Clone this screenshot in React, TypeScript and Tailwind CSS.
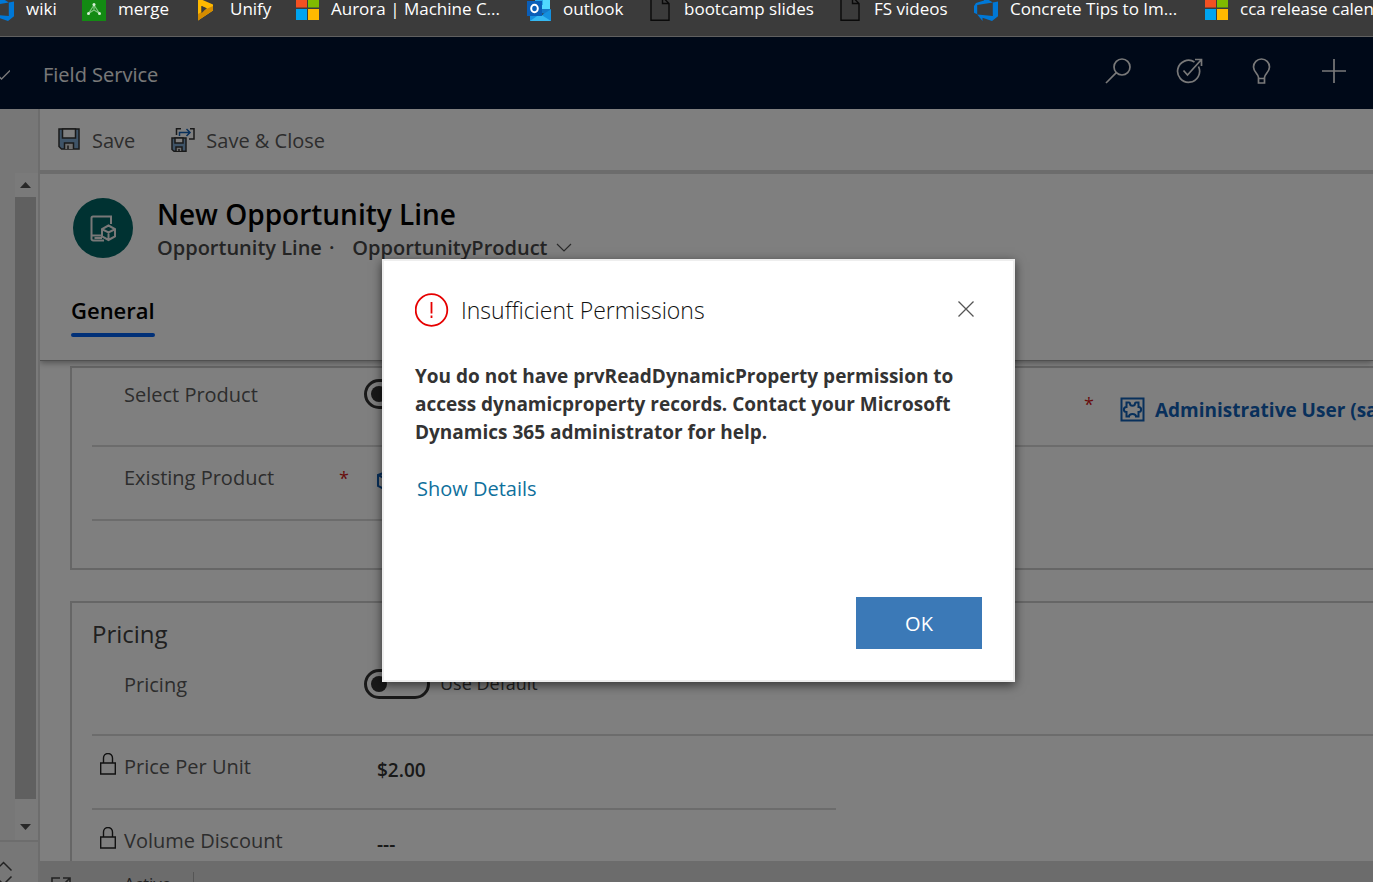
import React from "react";

type IconProps = { className?: string };

function DevOpsIcon({ className = "" }: IconProps) {
  return (
    <svg viewBox="0 0 24 24" className={`size-6 shrink-0 ${className}`} aria-hidden="true">
      <path
        fill="#0078d7"
        d="M24 4.500v14.800L18 24l-9.500-3.300V24L3.200 17.600l15.600 1.300V5.400L24 4.500ZM18.800 5.500 10 0v3.600L2 6 0 9v6.800l3.200 1.500V8.100l15.600-2.600Z"
      />
    </svg>
  );
}

function MergeIcon() {
  return (
    <svg viewBox="0 0 24 24" className="size-6 shrink-0" aria-hidden="true">
      <path fill="#138a13" d="M0 0h24v24H0z" />
      <path d="M12 8 6.500 16.500M12 8l5.500 8.500M6.500 16.500 12 13l5.500 3.500M12 8v5" stroke="#7fc47f" strokeWidth="1.200" fill="none" />
      <circle cx="12" cy="7.500" r="1.500" fill="#d5f0d5" />
      <circle cx="6.500" cy="16.500" r="1.500" fill="#d5f0d5" />
      <circle cx="17.500" cy="16.500" r="1.500" fill="#d5f0d5" />
    </svg>
  );
}

function UnifyIcon() {
  return (
    <svg viewBox="0 0 24 24" className="size-6 shrink-0" aria-hidden="true">
      <path fill="#ffb900" d="M4 1 19 7.500v6L4 23.500V17l9-5.500L7.500 9v6L4 17V1Z" />
      <path fill="#d48c00" d="m4 17 9.500-5.500L19 9v4.500l-15 10V17Z" />
      <path fill="#3b3b3b" d="m7.500 9 5 2.300-5 5V9Z" />
    </svg>
  );
}

function MicrosoftIcon() {
  return (
    <svg viewBox="0 0 24 24" className="size-6 shrink-0" aria-hidden="true">
      <path fill="#f25022" d="M1 0h11v10.500H1z" />
      <path fill="#7fba00" d="M13 0h11v10.500H13z" />
      <path fill="#00a4ef" d="M1 12h11v11H1z" />
      <path fill="#ffb900" d="M13 12h11v11H13z" />
    </svg>
  );
}

function OutlookIcon() {
  return (
    <svg viewBox="0 0 24 24" className="size-6 shrink-0" aria-hidden="true">
      <path fill="#50d9ff" d="M8 0h15v13H8z" />
      <path fill="#28a8ea" d="M8 0h8v8H8z" />
      <path fill="#1478c8" d="M14 12h10l-6 5-4-1z" />
      <path fill="#1490df" d="M3 14v10h21V12l-9 6-12-4Z" />
      <path fill="#35b8f1" d="M3 24h21L13 17l-10 7Z" />
      <path fill="#0a5eb8" d="M0 4h15v15H0z" />
      <ellipse cx="7.500" cy="11.500" rx="3.300" ry="3.700" fill="none" stroke="#fff" strokeWidth="2" />
    </svg>
  );
}

function FileIcon() {
  return (
    <svg viewBox="0 0 24 24" className="size-6 shrink-0" aria-hidden="true">
      <path d="M3 0v23.300h18V6.500L14.500 0H3ZM14.500 0v6.500H21" fill="none" stroke="#0a0a0a" strokeWidth="1.400" />
    </svg>
  );
}

const bookmarks = [
  { label: "wiki", icon: <DevOpsIcon />, width: "w-[92px]" },
  { label: "merge", icon: <MergeIcon />, width: "w-[112px]" },
  { label: "Unify", icon: <UnifyIcon />, width: "w-[101px]" },
  { label: "Aurora | Machine C...", icon: <MicrosoftIcon />, width: "w-[232px]" },
  { label: "outlook", icon: <OutlookIcon />, width: "w-[121px]" },
  { label: "bootcamp slides", icon: <FileIcon />, width: "w-[190px]" },
  { label: "FS videos", icon: <FileIcon />, width: "w-[136px]" },
  { label: "Concrete Tips to Im...", icon: <DevOpsIcon />, width: "w-[230px]" },
  { label: "cca release calendar", icon: <MicrosoftIcon />, width: "w-[240px]" },
];

function BookmarksBar() {
  return (
    <nav aria-label="Bookmarks" className="h-[37px] shrink-0 overflow-hidden border-b border-[#606060] bg-[#3b3b3b]">
      <ul className="-mt-[3px] -ml-[10px] flex">
        {bookmarks.map((b) => (
          <li key={b.label} className={`shrink-0 ${b.width}`}>
            <a href="#" className="flex h-6 items-center gap-3 text-[17px] leading-[18px] whitespace-nowrap text-white">
              {b.icon}
              <span>{b.label}</span>
            </a>
          </li>
        ))}
      </ul>
    </nav>
  );
}

function AppHeader() {
  const button = "flex size-8 items-center justify-center";
  const svg = { fill: "none", stroke: "currentColor", strokeWidth: 1.7, className: "size-7", viewBox: "0 0 28 28" };
  return (
    <header className="flex h-[72px] shrink-0 items-center bg-[#001230] pr-[23px] text-[#f2f2f2]">
      <button type="button" aria-label="Switch app" className="mr-[33px] pt-1">
        <svg viewBox="0 0 10 12" className="h-3 w-[10px]" fill="none" stroke="currentColor" strokeWidth="1.300">
          <path d="M-6 2.500 1.500 10 10 1.500" />
        </svg>
      </button>
      <span className="pt-[3px] text-xl">Field Service</span>
      <div className="ml-auto flex items-center gap-10 pb-1">
        <button type="button" aria-label="Search" className={button}>
          <svg {...svg}>
            <circle cx="18" cy="10" r="8" />
            <path d="M12.300 15.700 2 26" />
          </svg>
        </button>
        <button type="button" aria-label="Tasks" className={button}>
          <svg {...svg}>
            <path d="M18.500 5A11 11 0 1 0 22.500 9.500" />
            <path d="m7.500 13.500 4 4.500L25 3M19 2.500h6.500V9" />
          </svg>
        </button>
        <button type="button" aria-label="Assistant" className={button}>
          <svg {...svg}>
            <path d="M10.500 20.500c0-3.500-5-5.500-5-10.500a8 8 0 0 1 16 0c0 5-5 7-5 10.500V26h-6v-5.500ZM10.500 21.500h6" />
          </svg>
        </button>
        <button type="button" aria-label="New" className={button}>
          <svg {...svg}>
            <path d="M14 2v24M2 14h24" />
          </svg>
        </button>
      </div>
    </header>
  );
}

function Sidebar() {
  return (
    <aside className="flex w-10 shrink-0 flex-col border-r-2 border-[#dadada] bg-[#eeeeee]">
      <div className="mt-16 ml-[15px] flex min-h-0 flex-1 flex-col bg-[#f4f4f4]">
        <svg viewBox="0 0 21 24" className="h-6 w-[21px] shrink-0" fill="#505050">
          <path d="m5 15 5.500-6 5.500 6H5Z" />
        </svg>
        <div className="w-[21px] flex-1 bg-[#c1c1c1]" />
        <svg viewBox="0 0 21 41" className="h-[41px] w-[21px] shrink-0" fill="#505050">
          <path d="m5 25 5.500 6 5.500-6H5Z" />
        </svg>
      </div>
      <button type="button" aria-label="Change area" className="h-[42px] shrink-0 border-t-2 border-[#dadada]">
        <svg viewBox="0 0 38 40" className="h-10 w-[38px]" fill="none" stroke="#444" strokeWidth="1.500">
          <path d="m-4 28 7.500-7.500 8 8M-4 35l7.500 7.500 8-8" />
        </svg>
      </button>
    </aside>
  );
}

function CommandBar() {
  return (
    <div className="flex h-[65px] shrink-0 items-center gap-9 border-b-4 border-[#d8d8d8] pl-[17px] text-xl text-[#5a5a5a]">
      <button type="button" className="flex items-center gap-[11px]">
        <svg viewBox="0 0 24 24" className="size-6" fill="none" stroke="#333" strokeWidth="1.500">
          <path fill="#7fa8d0" d="M2 1h20v20H4.500L2 18.500V1Z" />
          <path fill="#fff" d="M5.500 1h13v9h-13z" />
          <path fill="#ddd" d="M7.500 21v-6h9v6M11 21v-3.500" />
        </svg>
        <span className="pt-[2px]">Save</span>
      </button>
      <button type="button" className="flex items-center gap-[11px]">
        <svg viewBox="0 0 24 24" className="size-6" fill="none" stroke="#333" strokeWidth="1.500">
          <path d="M5.500 7V.8H10M19 .8h4V11h-5" />
          <path fill="#7fa8d0" d="M1 10h14v13.200H3L1 21.500V10Z" />
          <path fill="#fff" d="M4 10h8v5H4z" />
          <path fill="#ddd" d="M5 23v-4h6v4M8 23v-2" />
          <path stroke="#1160b7" d="M8.500 8V4.500H19M15.500 1l3.500 3.500L15.500 8" />
        </svg>
        <span className="pt-[2px]">Save &amp; Close</span>
      </button>
    </div>
  );
}

function RecordHeader() {
  return (
    <div className="relative z-10 h-[187px] shrink-0 border-b border-[#a0a0a0] bg-white px-[31px] pt-6 shadow-[0_2px_6px_rgba(0,0,0,0.35)] [clip-path:inset(0_0_-8px_0)]">
      <div className="flex gap-6 pl-[2px]">
        <div className="flex size-[60px] shrink-0 items-center justify-center rounded-full bg-[#006464]">
          <svg viewBox="0 0 28 28" className="size-7" fill="none" stroke="#f0f0f0" strokeWidth="2">
            <path d="M22 10V2.500H4A1.500 1.500 0 0 0 2.500 4v20A2 2 0 0 0 4.500 26.500H15M3 21.500h9.500M5.500 24H13" />
            <path d="m19.500 11.500 6.500 3.500v7.500L19.500 26 13 22.500V15l6.500-3.500ZM13.500 15.500l6 3 6-3M19.500 18.500v7" />
          </svg>
        </div>
        <div>
          <h1 className="text-[28px] leading-8 font-semibold text-black">New Opportunity Line</h1>
          <div className="flex items-center pt-[2px] text-xl leading-8 font-semibold text-[#484848]">
            <span>Opportunity Line</span>
            <span className="mr-[18px] ml-[7px]">·</span>
            <button type="button" className="flex items-center gap-2">
              OpportunityProduct
              <svg viewBox="0 0 16 16" className="size-4" fill="none" stroke="#555" strokeWidth="1.200">
                <path d="m1 4 7 7 7-7" />
              </svg>
            </button>
          </div>
        </div>
      </div>
      <div role="tablist" className="mt-[30px] flex">
        <button type="button" role="tab" aria-selected="true" className="text-[22px] leading-8 font-semibold text-black">
          General
          <span className="mt-[7px] block h-1 rounded-sm bg-[#0060f0]" />
        </button>
      </div>
    </div>
  );
}

function LockIcon() {
  return (
    <svg viewBox="0 0 16 22" className="h-[22px] w-4" fill="none" stroke="#222" strokeWidth="1.400" aria-hidden="true">
      <path d="M.7 10h14.600v11H.7zM3.500 10V5a4.500 4.500 0 0 1 9 0v5" />
    </svg>
  );
}

function FieldLabel({ htmlFor, locked, required, children }: { htmlFor: string; locked?: boolean; required?: boolean; children: React.ReactNode }) {
  return (
    <div className="flex w-[272px] shrink-0 text-xl leading-7 text-[#5a5a5a]">
      <span className="w-8 shrink-0 pl-2">{locked && <LockIcon />}</span>
      <label htmlFor={htmlFor} className="whitespace-nowrap">
        {children}
      </label>
      {required && <span className="mr-[15px] ml-auto text-lg leading-7 text-[#d01818]">*</span>}
    </div>
  );
}

function Toggle({ id }: { id: string }) {
  return (
    <input
      id={id}
      type="checkbox"
      className="-mt-[2px] h-[30px] w-[66px] shrink-0 appearance-none rounded-full border-3 border-[#333] p-[4px] before:block before:size-4 before:rounded-full before:bg-[#333]"
    />
  );
}

function Form() {
  const value = "mt-[3px] ml-[13px] w-64 bg-transparent text-[19px] leading-7 font-semibold text-[#333]";
  return (
    <main className="min-h-0 flex-1 overflow-hidden pt-[5px] pl-[30px]">
      <section className="h-[204px] border-2 border-r-0 border-[#cccccc] pl-5">
        <div className="flex h-[79px] items-start border-b-2 border-[#d8d8d8] pt-[13px]">
          <div className="flex w-[744px] shrink-0">
            <FieldLabel htmlFor="select-product">Select Product</FieldLabel>
            <Toggle id="select-product" />
          </div>
          <div className="flex pt-[11px] pl-[248px] text-lg leading-6 whitespace-nowrap">
            <span className="text-[#d01818]">*</span>
            <a href="#" className="ml-[26px] flex items-center gap-[10px] text-[19px] leading-8 font-bold text-[#1160b7]">
              <svg viewBox="0 0 25 25" className="size-[25px]" fill="none" stroke="currentColor" strokeWidth="2">
                <path d="M1.500 1.500h22v22h-22z" />
                <path d="M6.500 5.500H9a1 1 0 0 1 1 1c0 3 5 3 5 0a1 1 0 0 1 1-1h2.500V10c3.500 0 3.500 5 0 5v4.500H16c0-3.500-7-3.500-7 0H6.500V15C3 15 3 10 6.500 10V5.500Z" />
              </svg>
              <span className="pt-[2px]">Administrative User (sample)</span>
            </a>
          </div>
        </div>
        <div className="flex h-[74px] w-[744px] items-start border-b-2 border-[#d8d8d8] pt-[17px]">
          <FieldLabel htmlFor="existing-product" required>
            Existing Product
          </FieldLabel>
          <button id="existing-product" type="button" aria-label="Existing Product" className="mt-[7px] ml-3">
            <svg viewBox="0 0 20 20" className="size-5" fill="none" stroke="#1160b7" strokeWidth="2">
              <path d="m10 1 8 3v11l-8 4-8-4V4l8-3ZM2 4l8 4 8-4M10 8v11" />
            </svg>
          </button>
        </div>
      </section>

      <section className="mt-[31px] border-2 border-r-0 border-[#cccccc] pl-5">
        <h2 className="h-[51px] pt-[15px] text-2xl leading-8 text-[#404040]">Pricing</h2>
        <div className="flex h-[82px] items-start border-b-2 border-[#d8d8d8] pt-[17px]">
          <FieldLabel htmlFor="pricing">Pricing</FieldLabel>
          <Toggle id="pricing" />
          <span className="ml-[10px] text-lg leading-6 text-[#444]">Use Default</span>
        </div>
        <div className="flex h-[74px] w-[744px] items-start border-b-2 border-[#d8d8d8] pt-[17px]">
          <FieldLabel htmlFor="price" locked>
            Price Per Unit
          </FieldLabel>
          <input id="price" readOnly value="$2.00" className={value} />
        </div>
        <div className="flex h-[74px] w-[744px] items-start pt-[17px]">
          <FieldLabel htmlFor="discount" locked>
            Volume Discount
          </FieldLabel>
          <input id="discount" readOnly value="---" className={value} />
        </div>
      </section>
    </main>
  );
}

function StatusBar() {
  return (
    <footer className="flex h-[21px] shrink-0 items-start overflow-hidden bg-[#d8d8d8] pt-[11px] pl-[11px] text-[17px] leading-6 text-[#444]">
      <svg viewBox="0 0 20 20" className="mt-[5px] size-5 shrink-0" fill="none" stroke="currentColor" strokeWidth="1.600">
        <path d="M9 1H1v18h18v-8M12 1h7v7M19 1l-9 9" />
      </svg>
      <span className="ml-[53px]">Active</span>
      <span className="ml-[22px] h-6 w-px bg-[#aaaaaa]" />
    </footer>
  );
}

function PermissionDialog() {
  return (
    <div className="absolute inset-0 z-20 flex items-center justify-center bg-black/50 pt-[22px] pl-6">
      <div
        role="alertdialog"
        aria-labelledby="dialog-title"
        aria-describedby="dialog-message"
        className="flex min-h-[423px] w-[633px] flex-col border-2 border-[#eeeeee] bg-white px-[31px] pt-8 pb-[31px] text-[#333] shadow-[0_3px_10px_rgba(0,0,0,0.6)]"
      >
        <div className="flex h-[34px] items-center">
          <svg viewBox="0 0 34 34" className="size-[34px]" fill="none" stroke="#e60000" strokeWidth="1.800" aria-hidden="true">
            <circle cx="16.500" cy="17" r="15.800" />
            <path d="M16.500 9v11.500M16.500 22.500V25" />
          </svg>
          <h2 id="dialog-title" className="ml-3 text-[23px] leading-8 font-light text-[#111]">
            Insufficient Permissions
          </h2>
          <button type="button" aria-label="Close" className="mr-2 ml-auto pb-[3px]">
            <svg viewBox="0 0 16 16" className="size-4" fill="none" stroke="#555" strokeWidth="1.300">
              <path d="m.5.5 15 15M15.500.5l-15 15" />
            </svg>
          </button>
        </div>
        <p id="dialog-message" className="mt-[35px] max-w-[552px] text-[19px] leading-7 font-bold">
          You do not have prvReadDynamicProperty permission to access dynamicproperty records. Contact your Microsoft
          Dynamics 365 administrator for help.
        </p>
        <a href="#" className="mt-[29px] ml-[2px] self-start text-xl leading-7 text-[#0f709c]">
          Show Details
        </a>
        <button type="button" className="mt-auto h-[52px] w-[126px] self-end bg-[#3b79b7] pt-[2px] text-xl text-white">
          OK
        </button>
      </div>
    </div>
  );
}

export default function App() {
  return (
    <div className="flex h-screen flex-col overflow-hidden bg-white font-['Open_Sans','Noto_Sans',sans-serif]">
      <BookmarksBar />
      <div className="relative flex min-h-0 flex-1 flex-col">
        <AppHeader />
        <div className="flex min-h-0 flex-1">
          <Sidebar />
          <div className="flex min-w-0 flex-1 flex-col">
            <CommandBar />
            <RecordHeader />
            <Form />
            <StatusBar />
          </div>
        </div>
        <PermissionDialog />
      </div>
    </div>
  );
}
